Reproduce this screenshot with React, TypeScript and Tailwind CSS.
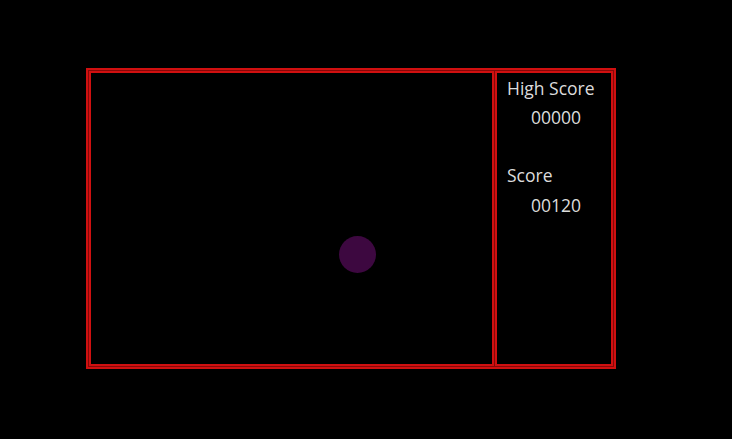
export default function App() {
  return (
    <div className="min-h-screen w-full bg-black pl-[86px] pt-[68px] font-['Open_Sans',sans-serif]">
      {/* frame: outer red rule, thin dark gap, then the two panels */}
      <div className="flex h-[301px] w-[530px] gap-px border-2 border-[#d01010] bg-[#850808] p-px">
        {/* play field */}
        <div className="relative h-full w-[405px] border-2 border-[#d01010] bg-black">
          <div className="absolute left-[248px] top-[163px] h-[37px] w-[37px] rounded-full bg-[#3d0840]" />
        </div>

        {/* score panel */}
        <div className="h-full w-[118px] border-2 border-[#d01010] bg-black px-[10px] pt-px text-[17.5px] text-[#dcdcdc]">
          <p className="leading-[28px]">High Score</p>
          <p className="mt-px pl-[24px] leading-[28px]">00000</p>
          <p className="mt-[30px] leading-[28px]">Score</p>
          <p className="mt-[2px] pl-[24px] leading-[28px]">00120</p>
        </div>
      </div>
    </div>
  )
}
